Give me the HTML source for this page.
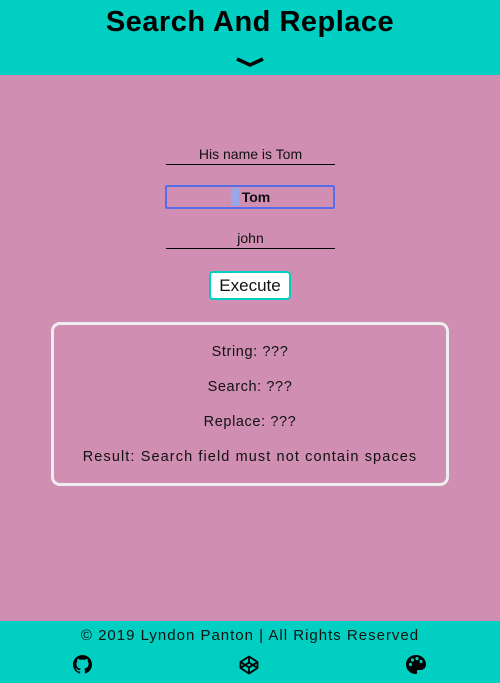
<!DOCTYPE html>
<html><head><style>
*{margin:0;padding:0;box-sizing:border-box}
body{width:500px;height:683px;background:#cf8eb2;font-family:"Liberation Sans",sans-serif;position:relative;overflow:hidden;color:#111}
.hdr{position:absolute;left:0;top:0;width:500px;height:75px;background:#00cfc1}
.hdr h1{position:absolute;top:6px;width:100%;text-align:center;font-family:"Liberation Sans",sans-serif;font-size:29px;font-weight:bold;letter-spacing:0.5px;color:#000}
.chev{position:absolute;left:236px;top:56px}
.in{position:absolute;left:166px;width:169px;text-align:center;font-size:14px;border-bottom:1px solid #000;height:20px;line-height:18px}
.sel{position:absolute;left:165px;top:185px;width:170px;height:24px;border:2px solid #5a6de8;border-radius:2px;text-align:center;font-weight:bold;font-size:14px;line-height:20px;padding-left:12px}
.hl{position:absolute;left:64px;top:1px;width:8px;height:18px;background:#9aa6e6}
.btn{position:absolute;left:209px;top:271px;width:82px;height:29px;background:#fff;border:2px solid #00cfc1;border-radius:4px;text-align:center;font-size:17px;line-height:25px}
.box{position:absolute;left:51px;top:322px;width:398px;height:164px;border:3px solid #eee;border-radius:9px}
.box p{position:absolute;width:100%;text-align:center;font-size:14.5px;letter-spacing:0.6px}
.ftr{position:absolute;left:0;top:621px;width:500px;height:62px;background:#00cfc1}
.ftr p{position:absolute;top:6px;width:100%;text-align:center;font-size:15px;letter-spacing:1px}
.ic{position:absolute;top:34px}
</style></head><body>
<div class="hdr"><h1>Search And Replace</h1>
<svg class="chev" width="28" height="12" viewBox="0 0 28 12"><path d="M1 3 L14 9 L27 3" stroke="#000" stroke-width="3.5" fill="none"/></svg></div>
<div class="in" style="top:145px">His name is Tom</div>
<div class="sel"><span class="hl"></span>Tom</div>
<div class="in" style="top:229px">john</div>
<div class="btn">Execute</div>
<div class="box">
<p style="top:19px">String: ???</p>
<p style="top:54px">Search: ???</p>
<p style="top:89px">Replace: ???</p>
<p style="top:124px;letter-spacing:1.1px">Result: Search field must not contain spaces</p>
</div>
<div class="ftr"><p>© 2019 Lyndon Panton | All Rights Reserved</p>
<svg class="ic" style="left:73px" width="19" height="19" viewBox="0 0 16 16"><path fill="#000" d="M8 0C3.6 0 0 3.6 0 8c0 3.5 2.3 6.5 5.5 7.6.4.1.5-.2.5-.4v-1.4c-2.2.5-2.7-1-2.7-1-.4-.9-.9-1.2-.9-1.2-.7-.5.1-.5.1-.5.8.1 1.2.8 1.2.8.7 1.2 1.900.9 2.3.7.1-.5.3-.9.5-1.1-1.800-.2-3.600-.9-3.600-4 0-.9.3-1.600.8-2.100-.1-.2-.4-1 .1-2.100 0 0 .7-.2 2.200.8.6-.2 1.300-.3 2-.3s1.400.1 2 .3c1.500-1 2.200-.8 2.200-.8.4 1.100.2 1.900.1 2.100.5.6.8 1.300.8 2.100 0 3.100-1.900 3.700-3.600 3.900.3.3.5.8.5 1.500v2.200c0 .2.1.5.6.4C13.700 14.500 16 11.500 16 8c0-4.400-3.600-8-8-8z"/></svg>
<svg class="ic" style="left:239px" width="20" height="20" viewBox="0 0 20 20"><g fill="none" stroke="#000" stroke-width="1.8" stroke-linejoin="round"><path d="M10 1.5L18.5 7v6L10 18.5 1.5 13V7z"/><path d="M1.5 7L10 12.5 18.5 7M1.5 13L10 7.5 18.5 13M10 1.5v6M10 12.5v6"/></g></svg>
<svg class="ic" style="left:406px" width="20" height="19" viewBox="0 0 20 19"><path fill="#000" d="M10 0C4.5 0 0 4 0 9.3S4.3 19 9.5 19c1.4 0 2-1 1.6-2-.4-.9-.2-2 1-2h2.6C17.6 15 20 12.6 20 9.4 20 4 15.5 0 10 0z"/><g fill="#00cfc1"><circle cx="4.5" cy="9.5" r="1.6"/><circle cx="6.5" cy="5" r="1.6"/><circle cx="11" cy="3.6" r="1.6"/><circle cx="15" cy="6.5" r="1.6"/></g></svg>
</div>
</body></html>
